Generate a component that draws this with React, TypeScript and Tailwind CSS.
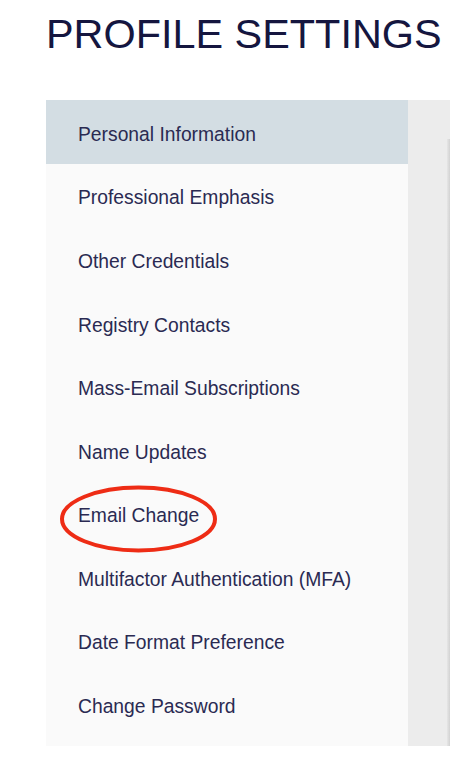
const items = [
  "Personal Information",
  "Professional Emphasis",
  "Other Credentials",
  "Registry Contacts",
  "Mass-Email Subscriptions",
  "Name Updates",
  "Email Change",
  "Multifactor Authentication (MFA)",
  "Date Format Preference",
  "Change Password",
];

function Circled() {
  // red hand-drawn style annotation around "Email Change"
  return (
    <svg
      className="absolute left-[12px] top-[2px] pointer-events-none"
      width="164"
      height="72"
      viewBox="0 0 164 72"
    >
      <ellipse
        cx="80.5"
        cy="35"
        rx="76.5"
        ry="31.5"
        fill="none"
        stroke="#ee2c15"
        strokeWidth="4"
      />
    </svg>
  );
}

export default function App() {
  return (
    <div className="min-h-[757px] bg-white font-['Liberation_Sans',Arial,sans-serif]">
      <h1 className="ml-[46px] pt-[14px] text-[41.4px] leading-none font-normal text-[#15163f] whitespace-nowrap">
        PROFILE SETTINGS
      </h1>
      <div className="mt-[45px] ml-[46px] flex">
        <nav className="w-[362px] bg-[#fafafa] pb-[10px]">
          {items.map((label, i) => (
            <div
              key={label}
              className={
                i === 0
                  ? "relative flex h-[63.6px] items-center pl-[32px] pt-[6px] bg-[#d3dde3]"
                  : "relative flex h-[63.6px] items-center pl-[32px] pt-[6px]"
              }
            >
              <span className="text-[19.3px] text-[#2a2a52] whitespace-nowrap">{label}</span>
              {label === "Email Change" && <Circled />}
            </div>
          ))}
        </nav>
        <div className="flex w-[42px] justify-end bg-[#ececec]">
          <div className="mt-[39px] w-[3px] bg-gradient-to-r from-[#e6e6e6] to-[#d2d2d2]" />
        </div>
      </div>
    </div>
  );
}
